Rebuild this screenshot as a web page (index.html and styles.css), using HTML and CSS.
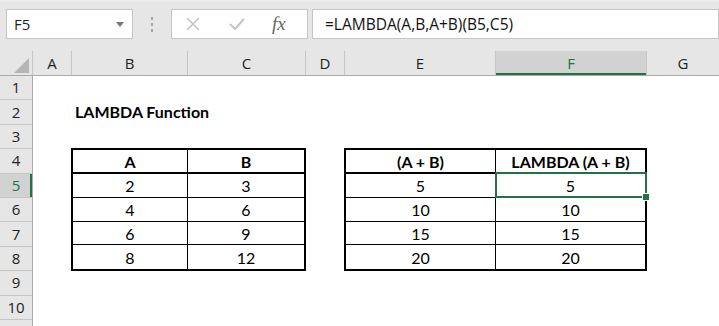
FILE: index.html
```html
<!DOCTYPE html>
<html lang="en">
<head>
    <meta charset="UTF-8">
    <title>LAMBDA Function</title>
    <link rel="stylesheet" href="styles.css">
</head>
<body>
    <div class="toolbar">
        <div class="namebox">
            <span>F5</span>
            <span class="caret"></span>
        </div>
        <div class="grip"><i></i><i></i><i></i></div>
        <div class="fxbox">
            <svg class="ico" width="16" height="16" viewBox="0 0 16 16">
                <path d="M2 2 L14 14 M14 2 L2 14" stroke="#c4c4c4" stroke-width="1.6" fill="none"/>
            </svg>
            <svg class="ico" width="18" height="16" viewBox="0 0 18 16">
                <path d="M2 8 L7 13 L16 3" stroke="#c4c4c4" stroke-width="2" fill="none"/>
            </svg>
            <span class="fx">fx</span>
        </div>
        <div class="formula">=LAMBDA(A,B,A+B)(B5,C5)</div>
    </div>

    <div class="colheads">
        <div class="corner"><span class="tri"></span></div>
        <div class="ch w-a">A</div>
        <div class="ch w-b">B</div>
        <div class="ch w-c">C</div>
        <div class="ch w-d">D</div>
        <div class="ch w-e">E</div>
        <div class="ch w-f active">F</div>
        <div class="ch w-g">G</div>
    </div>

    <div class="sheet">
        <div class="rowheads">
            <div class="rh">1</div>
            <div class="rh">2</div>
            <div class="rh">3</div>
            <div class="rh">4</div>
            <div class="rh active">5</div>
            <div class="rh">6</div>
            <div class="rh">7</div>
            <div class="rh">8</div>
            <div class="rh">9</div>
            <div class="rh">10</div>
            <div class="rh">11</div>
        </div>

        <div class="cells">
            <div class="title">LAMBDA Function</div>

            <div class="tbl tbl-left">
                <div class="c hd">A</div>
                <div class="c hd">B</div>
                <div class="c">2</div>
                <div class="c">3</div>
                <div class="c">4</div>
                <div class="c">6</div>
                <div class="c">6</div>
                <div class="c">9</div>
                <div class="c last">8</div>
                <div class="c last">12</div>
            </div>

            <div class="tbl tbl-right">
                <div class="c hd">(A + B)</div>
                <div class="c hd">LAMBDA (A + B)</div>
                <div class="c">5</div>
                <div class="c sel">5</div>
                <div class="c">10</div>
                <div class="c">10</div>
                <div class="c">15</div>
                <div class="c">15</div>
                <div class="c last">20</div>
                <div class="c last">20</div>
            </div>
        </div>
    </div>
</body>
</html>
```

FILE: styles.css
```css
body {
    margin: 0;
    width: 719px;
    height: 326px;
    overflow: hidden;
    background: #fff;
    font-family: "Open Sans", "Noto Sans", sans-serif;
    color: #222;
}

/* formula bar strip */
.toolbar {
    height: 51px;
    background: #e6e6e6;
    display: flex;
    align-items: flex-start;
    padding-top: 9px;
    box-sizing: border-box;
    border-top: 2px solid #ececec;
}
.namebox, .fxbox, .formula {
    height: 30px;
    margin-top: -2px;
    background: #fff;
    border: 1px solid #c6c6c6;
    box-sizing: border-box;
    display: flex;
    align-items: center;
}
.namebox {
    margin-left: 6px;
    width: 127px;
    padding: 0 8px 0 7px;
    justify-content: space-between;
    font-size: 15px;
}
.caret {
    width: 0;
    height: 0;
    border-left: 4px solid transparent;
    border-right: 4px solid transparent;
    border-top: 5px solid #777;
}
.grip {
    width: 38px;
    display: flex;
    flex-direction: column;
    align-items: center;
    gap: 3px;
    padding-top: 6px;
}
.grip i {
    display: block;
    width: 2px;
    height: 3px;
    background: #a8a8a8;
}
.fxbox {
    width: 137px;
    padding-left: 13px;
    gap: 27px;
}
.fx {
    font-family: "Liberation Serif", serif;
    font-style: italic;
    font-size: 19px;
    color: #666;
    margin-left: -1px;
}
.formula {
    flex: 1;
    margin-left: 4px;
    padding-left: 12px;
    font-size: 15.5px;
    color: #111;
}

/* column headers */
.colheads {
    display: flex;
    height: 24px;
    background: #e6e6e6;
    border-bottom: 1px solid #ababab;
    font-size: 15px;
}
.corner {
    width: 33px;
    position: relative;
    border-right: 1px solid #c6c6c6;
    box-sizing: border-box;
}
.tri {
    position: absolute;
    right: 3px;
    bottom: 2px;
    width: 0;
    height: 0;
    border-left: 15px solid transparent;
    border-bottom: 15px solid #b5b5b5;
}
.ch {
    box-sizing: border-box;
    border-right: 1px solid #c6c6c6;
    display: flex;
    align-items: center;
    justify-content: center;
    line-height: 1;
}
.ch.active {
    background: #d2d2d2;
    color: #217346;
    box-shadow: inset 0 -2px 0 #217346;
}
.w-a { width: 39px; }
.w-b { width: 116px; }
.w-c { width: 118px; }
.w-d { width: 39px; }
.w-e { width: 151px; }
.w-f { width: 151px; }
.w-g { flex: 1; border-right: 0; }

/* sheet body */
.sheet {
    display: flex;
    height: 250px;
    overflow: hidden;
}
.rowheads {
    width: 33px;
    flex: none;
    display: flex;
    flex-direction: column;
    background: #e6e6e6;
    border-right: 1px solid #ababab;
    box-sizing: border-box;
    font-size: 15px;
}
.rh {
    height: 24.4px;
    flex: none;
    box-sizing: border-box;
    border-bottom: 1px solid #c6c6c6;
    display: flex;
    align-items: center;
    justify-content: center;
    line-height: 1;
}
.rh.active {
    background: #d2d2d2;
    color: #217346;
    box-shadow: inset -2px 0 0 #217346;
}

.cells {
    flex: 1;
    display: grid;
    grid-template-columns: 39px 116px 118px 39px 151px 151px 1fr;
    grid-template-rows: repeat(11, 24.4px);
    font-family: Lato, "Liberation Sans", sans-serif;
    font-size: 16px;
    color: #000;
}
.title {
    grid-column: 2;
    grid-row: 2;
    font-weight: bold;
    padding-left: 3px;
    align-self: center;
    white-space: nowrap;
    margin-top: -2px;
}

.tbl {
    grid-row: 4 / 9;
    margin: -1px 0 0 -1px;
    border: 2px solid #000;
    display: grid;
    grid-template-rows: repeat(5, 1fr);
}
.tbl-left {
    grid-column: 2 / 4;
    grid-template-columns: 115px 1fr;
}
.tbl-right {
    grid-column: 5 / 7;
    grid-template-columns: 150px 1fr;
}
.c {
    display: flex;
    align-items: center;
    justify-content: center;
    border-bottom: 1px solid #000;
    padding-top: 1px;
}
.c:nth-child(odd) {
    border-right: 1px solid #000;
}
.c.hd {
    font-weight: bold;
    border-bottom-width: 2px;
}
.c.last {
    border-bottom: 0;
}
.sel {
    position: relative;
}
.sel::after {
    content: "";
    position: absolute;
    left: -1px;
    top: -2px;
    right: -2px;
    bottom: -1px;
    border: 2px solid #217346;
}
.sel::before {
    content: "";
    position: absolute;
    right: -5px;
    bottom: -4px;
    width: 6px;
    height: 6px;
    background: #217346;
    border: 1px solid #fff;
    z-index: 1;
}
```
